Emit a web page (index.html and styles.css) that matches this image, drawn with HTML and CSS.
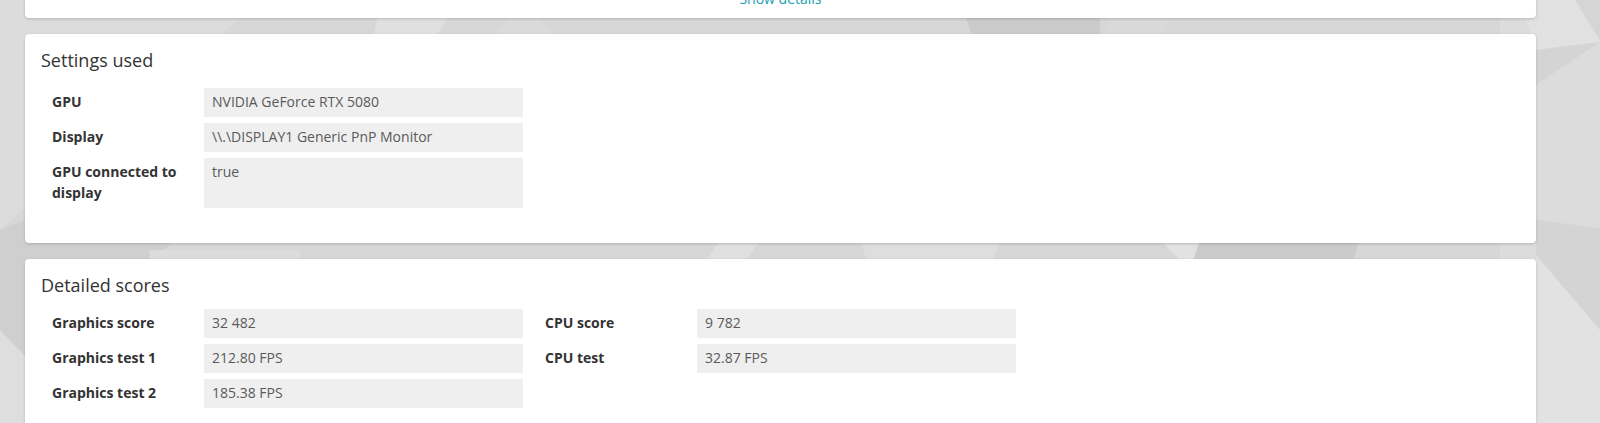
FILE: index.html
```html
<!DOCTYPE html>
<html lang="en">
<head>
<meta charset="utf-8">
<title>Result details</title>
<link rel="stylesheet" href="styles.css">
</head>
<body>
<svg class="bg" viewBox="0 0 1600 423" preserveAspectRatio="none" aria-hidden="true">
  <rect x="0" y="0" width="1600" height="423" fill="#d7d7d7"/>
  <polygon points="0,0 260,0 0,230" fill="#dcdcdc"/>
  <polygon points="0,230 300,110 0,420" fill="#cfcfcf"/>
  <polygon points="0,330 0,423 90,423" fill="#dedede"/>
  <polygon points="150,250 300,250 270,423 130,423" fill="#dcdcdc"/>
  <polygon points="380,0 460,0 420,60 370,60" fill="#e0e0e0"/>
  <polygon points="520,0 580,60 480,60" fill="#dadada"/>
  <polygon points="960,0 1100,0 1100,60 980,60" fill="#cbcbcb"/>
  <polygon points="1120,0 1180,0 1150,60 1090,60" fill="#d9d9d9"/>
  <polygon points="720,240 760,240 740,270 700,270" fill="#e0e0e0"/>
  <polygon points="860,240 1000,240 990,270 870,270" fill="#dedede"/>
  <polygon points="1160,240 1200,240 1190,270" fill="#e2e2e2"/>
  <polygon points="1200,240 1360,240 1350,270 1190,270" fill="#cbcbcb"/>
  <polygon points="1500,0 1600,0 1600,423 1500,423" fill="#dcdcdc"/>
  <polygon points="1520,0 1600,0 1600,42 1536,50" fill="#e1e1e1"/>
  <polygon points="1575,0 1600,0 1600,40" fill="#d5d5d5"/>
  <polygon points="1536,50 1600,42 1536,85" fill="#d4d4d4"/>
  <polygon points="1536,220 1600,228 1600,330 1536,255" fill="#d4d4d4"/>
  <polygon points="1536,255 1600,330 1600,423 1536,423" fill="#e2e2e2"/>
</svg>

<main class="page">
  <section class="card card-top">
    <a class="show-details" href="#">Show details</a>
  </section>

  <section class="card">
    <h2 class="card-title">Settings used</h2>
    <div class="info-grid settings">
      <div class="row"><div class="label">GPU</div><div class="value">NVIDIA GeForce RTX 5080</div></div>
      <div class="row"><div class="label">Display</div><div class="value">\\.\DISPLAY1 Generic PnP Monitor</div></div>
      <div class="row"><div class="label">GPU connected to display</div><div class="value">true</div></div>
    </div>
  </section>

  <section class="card">
    <h2 class="card-title">Detailed scores</h2>
    <div class="scores">
      <div class="info-grid">
        <div class="row"><div class="label">Graphics score</div><div class="value">32 482</div></div>
        <div class="row"><div class="label">Graphics test 1</div><div class="value">212.80 FPS</div></div>
        <div class="row"><div class="label">Graphics test 2</div><div class="value">185.38 FPS</div></div>
      </div>
      <div class="info-grid">
        <div class="row"><div class="label">CPU score</div><div class="value">9 782</div></div>
        <div class="row"><div class="label">CPU test</div><div class="value">32.87 FPS</div></div>
      </div>
    </div>
  </section>
</main>
</body>
</html>
```
FILE: styles.css
```css
html, body {
  margin: 0;
  padding: 0;
  height: 423px;
  overflow: hidden;
}
body {
  font-family: "Open Sans", "Noto Sans", sans-serif;
  font-size: 14px;
  color: #333;
  background: #d9d9d9;
  position: relative;
}
.bg {
  position: absolute;
  left: 0;
  top: 0;
  width: 1600px;
  height: 423px;
  z-index: 0;
}
.page {
  position: relative;
  z-index: 1;
  width: 1511px;
  margin-left: 25px;
  display: flex;
  flex-direction: column;
  gap: 16px;
}
.card {
  background: #fff;
  border-radius: 4px;
  box-shadow: 0 1px 3px rgba(0, 0, 0, 0.18);
  padding: 16px 16px 35px;
}
.card-top {
  height: 40px;
  margin-top: -22px;
  padding: 0;
  display: flex;
  align-items: flex-end;
  justify-content: center;
  box-sizing: border-box;
}
.show-details {
  color: #1a9db3;
  text-decoration: none;
  font-size: 14px;
  line-height: 20px;
  margin-bottom: 9px;
}
.card-title {
  margin: 0 0 18px;
  font-size: 18px;
  line-height: 20px;
  font-weight: 500;
  color: #333;
}
.card:last-child .card-title { margin-bottom: 14px; }
.info-grid {
  display: flex;
  flex-direction: column;
  gap: 6px;
  width: 482px;
}
.row {
  display: grid;
  grid-template-columns: 163px 319px;
}
.label {
  font-weight: 700;
  color: #333;
  line-height: 21px;
  padding: 3px 19px 5px 11px;
}
.value {
  background: #efefef;
  color: #5a5a5a;
  line-height: 21px;
  padding: 3px 8px 5px;
}
.scores {
  display: flex;
  gap: 11px;
  align-items: flex-start;
}
```
